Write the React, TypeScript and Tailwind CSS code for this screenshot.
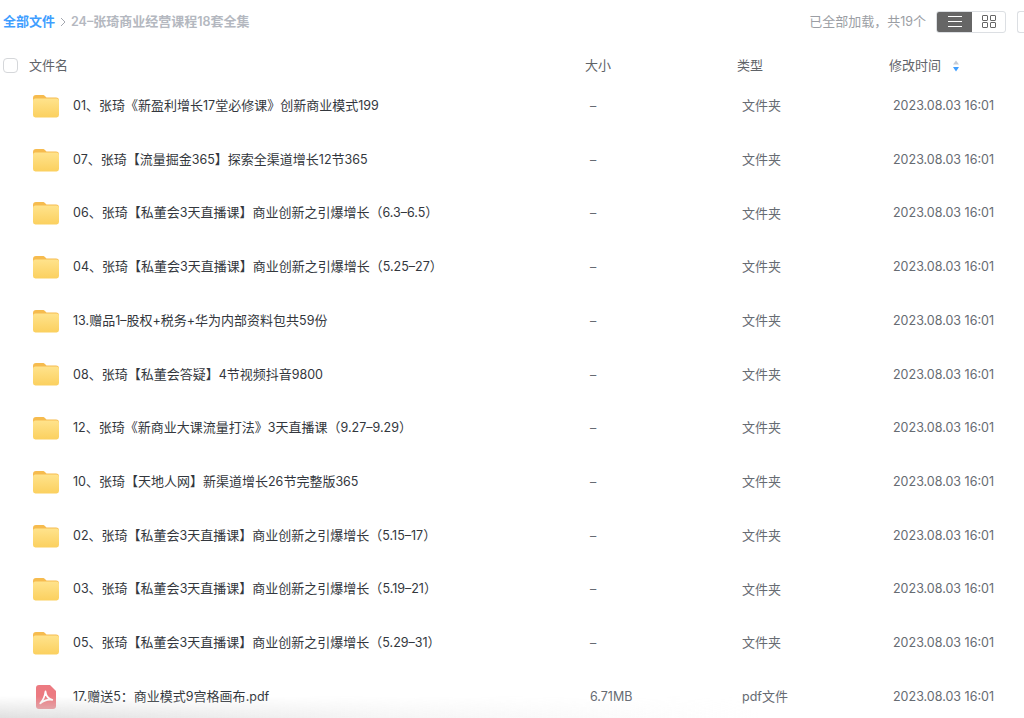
// 网盘文件列表
const FONT = "font-['Inter','Noto_Sans_CJK_SC',sans-serif]";

type Row = { name: string; size: string; type: string; pdf?: boolean };

const rows: Row[] = [
  { name: "01、张琦《新盈利增长17堂必修课》创新商业模式199", size: "–", type: "文件夹" },
  { name: "07、张琦【流量掘金365】探索全渠道增长12节365", size: "–", type: "文件夹" },
  { name: "06、张琦【私董会3天直播课】商业创新之引爆增长（6.3–6.5）", size: "–", type: "文件夹" },
  { name: "04、张琦【私董会3天直播课】商业创新之引爆增长（5.25–27）", size: "–", type: "文件夹" },
  { name: "13.赠品1–股权+税务+华为内部资料包共59份", size: "–", type: "文件夹" },
  { name: "08、张琦【私董会答疑】4节视频抖音9800", size: "–", type: "文件夹" },
  { name: "12、张琦《新商业大课流量打法》3天直播课（9.27–9.29）", size: "–", type: "文件夹" },
  { name: "10、张琦【天地人网】新渠道增长26节完整版365", size: "–", type: "文件夹" },
  { name: "02、张琦【私董会3天直播课】商业创新之引爆增长（5.15–17）", size: "–", type: "文件夹" },
  { name: "03、张琦【私董会3天直播课】商业创新之引爆增长（5.19–21）", size: "–", type: "文件夹" },
  { name: "05、张琦【私董会3天直播课】商业创新之引爆增长（5.29–31）", size: "–", type: "文件夹" },
  { name: "17.赠送5：商业模式9宫格画布.pdf", size: "6.71MB", type: "pdf文件", pdf: true },
];

// 西文和数字比汉字略小一点
function Mixed({ text }: { text: string }) {
  return (
    <>
      {text.split(/([0-9A-Za-z.+–: ]+)/).map((part, i) =>
        i % 2 === 1 ? (
          <span key={i} className="text-[12.5px]">
            {part}
          </span>
        ) : (
          part
        ),
      )}
    </>
  );
}

function FolderIcon() {
  return (
    <svg width="28" height="24" viewBox="0 0 28 24" className="shrink-0">
      <defs>
        <linearGradient id="folderBody" x1="0" y1="0" x2="0" y2="1">
          <stop offset="0" stopColor="#ffe38c" />
          <stop offset="1" stopColor="#fbd05f" />
        </linearGradient>
      </defs>
      <path d="M1 4C1 2 2 1 4 1h6.5c1.2 0 2 .5 2.7 1.3L14.5 3.6H24c2 0 3 1 3 3v3H1z" fill="#f6bb4e" />
      <rect x="1" y="4.4" width="26" height="19" rx="2.4" fill="url(#folderBody)" />
    </svg>
  );
}

function PdfIcon() {
  return (
    <svg width="20" height="24" viewBox="0 0 20 24" className="shrink-0">
      <path d="M3 0h11l6 6v15a3 3 0 0 1-3 3H3a3 3 0 0 1-3-3V3a3 3 0 0 1 3-3z" fill="#ec7a81" />
      <path
        d="M9.5 6.5c.3 3.5 2.6 7.3 6.8 8.3-3.9-.5-8.2.4-12 3.6 2.6-3 4.6-7.6 5.2-11.9z"
        fill="none"
        stroke="#fff"
        strokeWidth="1.8"
        strokeLinejoin="round"
      />
    </svg>
  );
}

function FileRow({ row }: { row: Row }) {
  return (
    <div className="h-[53.73px] flex items-center text-[13px]">
      <div className="flex items-center w-[590px]">
        <div className="w-[73px] flex justify-end pr-[13px]">
          {row.pdf ? <div className="pr-[4px]"><PdfIcon /></div> : <FolderIcon />}
        </div>
        <span className="text-[#33373d] whitespace-nowrap">
          <Mixed text={row.name} />
        </span>
      </div>
      <div className="w-[152px] text-[#666b72]">
        <Mixed text={row.size} />
      </div>
      <div className="w-[151px] text-[#666b72]">
        <Mixed text={row.type} />
      </div>
      <div className="text-[#666b72] whitespace-nowrap">
        <Mixed text="2023.08.03 16:01" />
      </div>
    </div>
  );
}

export default function App() {
  return (
    <div className={`relative w-[1024px] h-[718px] overflow-hidden bg-white ${FONT}`}>
      <div className="h-[43px] flex items-center pl-[3px] text-[13px]">
        <span className="text-[#3f9eff] font-semibold">全部文件</span>
        <svg width="6" height="10" viewBox="0 0 6 10" className="mx-[5px]">
          <path d="M1 1l4 4-4 4" fill="none" stroke="#a4a8b0" strokeWidth="1" />
        </svg>
        <span className="text-[#b4b8c0] font-semibold">
          <Mixed text="24–张琦商业经营课程18套全集" />
        </span>
        <span className="ml-auto mr-[10px] text-[#9b9ea4]">
          <Mixed text="已全部加载，共19个" />
        </span>
        <div className="w-[70px] h-[22px] flex rounded-[3px] border border-[#dcdfe3] overflow-hidden">
          <div className="w-[35px] bg-[#666666] flex items-center justify-center">
            <svg width="14" height="11" viewBox="0 0 14 11">
              <path d="M0 .5h14M0 5.5h14M0 10.5h14" stroke="#fff" strokeWidth="1" />
            </svg>
          </div>
          <div className="flex-1 flex items-center justify-center">
            <svg width="14" height="13" viewBox="0 0 14 13" fill="none" stroke="#666" strokeWidth="1">
              <rect x=".5" y=".5" width="5" height="5" rx=".5" />
              <rect x="8.5" y=".5" width="5" height="5" rx=".5" />
              <rect x=".5" y="7.5" width="5" height="5" rx=".5" />
              <rect x="8.5" y="7.5" width="5" height="5" rx=".5" />
            </svg>
          </div>
        </div>
        <div className="ml-[11px] w-[7px] h-[22px] shrink-0 rounded-l-[3px] border border-r-0 border-[#dcdfe3]" />
      </div>

      <div className="h-[45px] flex items-center text-[13px] text-[#5f6368]">
        <div className="w-[585px] flex items-center pl-[3px]">
          <div className="w-[15px] h-[15px] rounded-[4px] border border-[#d5d7da] mr-[11px]" />
          <span>文件名</span>
        </div>
        <div className="w-[152px]">大小</div>
        <div className="w-[152px]">类型</div>
        <span>修改时间</span>
        <svg width="8" height="12" viewBox="0 0 8 12" className="ml-[11px]">
          <path d="M4 .5L7 4.5H1z" fill="#c6cbd4" />
          <path d="M4 11.5L7 7H1z" fill="#3f9eff" />
        </svg>
      </div>

      <div className="-mt-[9px]">
        {rows.map((row) => (
          <FileRow key={row.name} row={row} />
        ))}
      </div>

      {/* 底部的渐变阴影 */}
      <div className="absolute left-0 bottom-0 w-[760px] h-[22px] pointer-events-none bg-gradient-to-r from-[#d8d8d8]/80 via-[#e6e6e6]/40 to-transparent [mask-image:linear-gradient(to_bottom,transparent,black)]" />
    </div>
  );
}
